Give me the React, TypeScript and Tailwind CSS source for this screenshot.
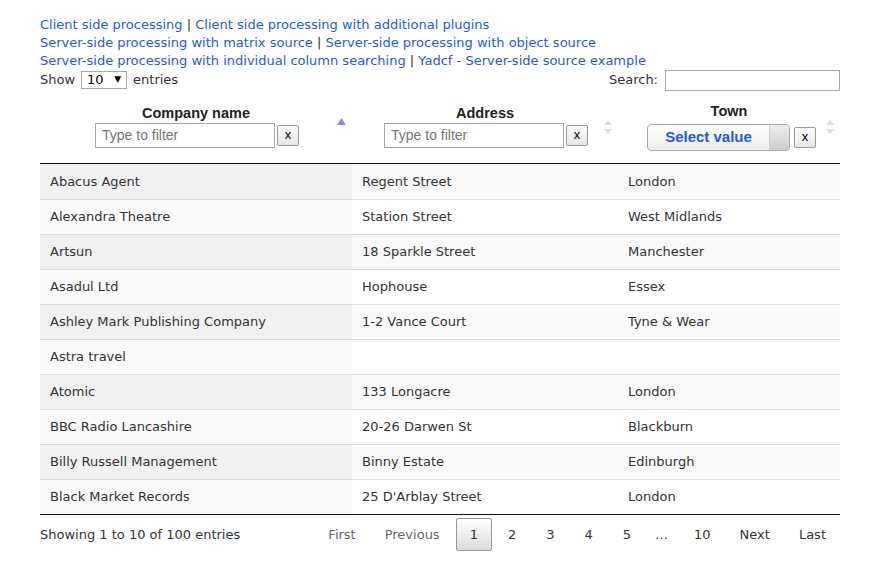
import React from "react";

const rows: [string, string, string][] = [
  ["Abacus Agent", "Regent Street", "London"],
  ["Alexandra Theatre", "Station Street", "West Midlands"],
  ["Artsun", "18 Sparkle Street", "Manchester"],
  ["Asadul Ltd", "Hophouse", "Essex"],
  ["Ashley Mark Publishing Company", "1-2 Vance Court", "Tyne & Wear"],
  ["Astra travel", "", ""],
  ["Atomic", "133 Longacre", "London"],
  ["BBC Radio Lancashire", "20-26 Darwen St", "Blackburn"],
  ["Billy Russell Management", "Binny Estate", "Edinburgh"],
  ["Black Market Records", "25 D'Arblay Street", "London"],
];

function SortBoth() {
  return (
    <svg width="8" height="14" viewBox="0 0 8 14" className="absolute right-[6px] top-1/2 -translate-y-1/2">
      <polygon points="4,0 8,5 0,5" fill="#dcdcdc" />
      <polygon points="0,9 8,9 4,14" fill="#dcdcdc" />
    </svg>
  );
}

function SortAsc() {
  return (
    <svg width="9" height="7" viewBox="0 0 9 7" className="absolute right-[6px] top-[28px]">
      <polygon points="4.5,0 9,7 0,7" fill="#8b8cf5" />
    </svg>
  );
}

function XBtn() {
  return (
    <div className="w-[22px] h-[21px] border border-[#999] rounded-[2px] bg-gradient-to-b from-[#fbfbfb] to-[#e8e8e8] flex items-center justify-center text-[13px] leading-none text-black font-['Liberation_Sans',sans-serif] pb-[2px]">
      x
    </div>
  );
}

function FilterInput() {
  return (
    <div className="w-[180px] h-[25px] border border-[#a9a9a9] bg-white flex items-center px-[6px] text-[14px] text-[#757575] font-['Liberation_Sans',sans-serif]">
      Type to filter
    </div>
  );
}

function Title({ children }: { children: React.ReactNode }) {
  return (
    <div className="font-['Liberation_Sans',sans-serif] font-bold text-[14.5px] leading-[17px] text-[#222]">
      {children}
    </div>
  );
}

export default function App() {
  const link = "text-[#1f5bd8]";
  const sep = <span className="text-[#333]"> | </span>;
  const pb = "ml-[2px] px-[13px] h-[33px] flex items-center border border-transparent";
  return (
    <div className="w-[881px] h-[576px] bg-white font-['DejaVu_Sans',Verdana,sans-serif] text-[13px] text-[#333]">
      <div className="ml-[40px] w-[800px] pt-[16px]">
        <div className="leading-[18px]">
          <div>
            <span className={link}>Client side processing</span>
            {sep}
            <span className={link}>Client side processing with additional plugins</span>
          </div>
          <div>
            <span className={link}>Server-side processing with matrix source</span>
            {sep}
            <span className={link}>Server-side processing with object source</span>
          </div>
          <div>
            <span className={link}>Server-side processing with individual column searching</span>
            {sep}
            <span className={link}>Yadcf - Server-side source example</span>
          </div>
        </div>

        <div className="flex justify-between items-center h-[20px]">
          <div className="flex items-center">
            <span>Show</span>
            <div className="ml-[6px] mr-[6px] w-[46px] h-[18px] border border-[#a9a9a9] flex items-center justify-between pl-[5px] pr-[5px] text-black">
              <span>10</span>
              <span className="text-[9px]">▼</span>
            </div>
            <span>entries</span>
          </div>
          <div className="flex items-center">
            <span>Search:</span>
            <div className="ml-[7px] w-[175px] h-[21px] border border-[#a9a9a9] bg-white" />
          </div>
        </div>

        <div className="flex h-[74px] border-b border-[#111]">
          <div className="relative w-[312px] flex flex-col items-center justify-center gap-[1px]">
            <Title>Company name</Title>
            <div className="flex items-center gap-[2px] ml-[2px]">
              <FilterInput />
              <XBtn />
            </div>
            <SortAsc />
          </div>
          <div className="relative w-[266px] flex flex-col items-center justify-center gap-[1px]">
            <Title>Address</Title>
            <div className="flex items-center gap-[2px] ml-[2px]">
              <FilterInput />
              <XBtn />
            </div>
            <SortBoth />
          </div>
          <div className="relative w-[222px] flex flex-col items-center justify-center gap-[4px]">
            <Title>Town</Title>
            <div className="flex items-center gap-[4px] ml-[5px]">
              <div className="w-[143px] h-[27px] border border-[#aaa] rounded-[4px] bg-gradient-to-b from-white to-[#ececec] flex overflow-hidden">
                <div className="flex-1 flex items-center justify-center font-['Liberation_Sans',sans-serif] font-bold text-[15px] text-[#1f5bd8]">
                  Select value
                </div>
                <div className="w-[20px] border-l border-[#ccc] bg-gradient-to-b from-[#eee] to-[#ccc]" />
              </div>
              <XBtn />
            </div>
            <SortBoth />
          </div>
        </div>

        <div>
          {rows.map((r, i) => {
            const odd = i % 2 === 0;
            return (
              <div
                key={i}
                className={`flex h-[35px] ${i === 0 ? "h-[34px]" : "border-t border-[#ddd]"} ${odd ? "bg-[#f9f9f9]" : "bg-white"}`}
              >
                <div className={`w-[312px] px-[10px] flex items-center ${odd ? "bg-[#f1f1f1]" : "bg-[#fafafa]"}`}>{r[0]}</div>
                <div className="w-[266px] px-[10px] flex items-center">{r[1]}</div>
                <div className="w-[222px] px-[10px] flex items-center">{r[2]}</div>
              </div>
            );
          })}
        </div>

        <div className="border-t border-[#111] flex justify-between items-start">
          <div className="mt-[3px] h-[33px] flex items-center">Showing 1 to 10 of 100 entries</div>
          <div className="mt-[3px] flex items-center">
            <span className="px-[13px] h-[33px] flex items-center text-[#666] border border-transparent">First</span>
            <span className="ml-[1px] px-[13px] h-[33px] flex items-center text-[#666] border border-transparent">Previous</span>
            <span className="ml-[2px] px-[13px] h-[33px] flex items-center text-[#333] border border-[#979797] rounded-[2px] bg-gradient-to-b from-white to-[#dcdcdc]">1</span>
            <span className={pb}>2</span>
            <span className={pb}>3</span>
            <span className={pb}>4</span>
            <span className={pb}>5</span>
            <span className="px-[10px] h-[33px] flex items-center">…</span>
            <span className={pb}>10</span>
            <span className="ml-[1px] px-[13px] h-[33px] flex items-center border border-transparent">Next</span>
            <span className="ml-[1px] px-[13px] h-[33px] flex items-center border border-transparent">Last</span>
          </div>
        </div>
      </div>
    </div>
  );
}
